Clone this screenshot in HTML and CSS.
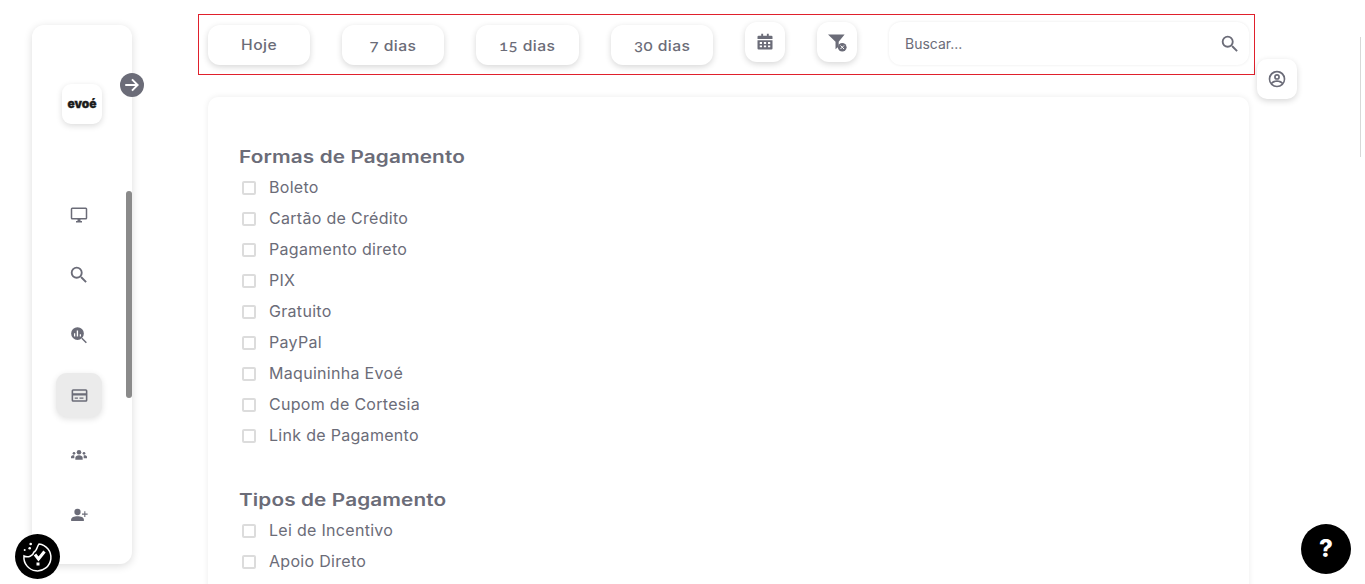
FILE: index.html
```html
<!DOCTYPE html>
<html lang="pt-BR">
<head>
<meta charset="utf-8">
<title>Evoé - Formas de Pagamento</title>
<link rel="stylesheet" href="styles.css">
</head>
<body>
<div class="page">
  <aside class="sidebar">
    <div class="logo">evoé</div>
    <button class="toggle" aria-label="Expandir">
      <svg viewBox="0 0 24 24" width="18" height="18"><path d="M3 12h16M12 4.500l7.500 7.500-7.500 7.500" fill="none" stroke="#fff" stroke-width="2.600"/></svg>
    </button>
    <nav class="nav">
      <a class="nav-item"><svg viewBox="0 0 24 24" width="18" height="18"><path d="M21 2H3a2 2 0 0 0-2 2v12a2 2 0 0 0 2 2h7v2H8v2h8v-2h-2v-2h7a2 2 0 0 0 2-2V4a2 2 0 0 0-2-2zm0 14H3V4h18z"/></svg></a>
      <a class="nav-item"><svg viewBox="0 0 24 24" width="22" height="22"><path d="M15.500 14h-.79l-.28-.27A6.470 6.470 0 0 0 16 9.500 6.500 6.500 0 1 0 9.500 16c1.610 0 3.090-.59 4.230-1.570l.27.28v.79l5 4.990L20.490 19zm-6 0C7 14 5 12 5 9.500S7 5 9.500 5 14 7 14 9.500 12 14 9.500 14z"/></svg></a>
      <a class="nav-item"><svg viewBox="0 0 24 24" width="18" height="18"><path d="M10 1.500a8.500 8.500 0 1 0 0 17 8.500 8.500 0 0 0 0-17zM7 14H5.300V9.500H7zm3.800 0H9V6h1.800zm3.900 0H13v-3h1.700z"/><path d="M16.500 15.500l6 6-1.400 1.400-6-6z"/></svg></a>
      <a class="nav-item active"><svg viewBox="0 0 24 24" width="19" height="19"><path d="M20 4H4a2 2 0 0 0-2 2v12a2 2 0 0 0 2 2h16a2 2 0 0 0 2-2V6a2 2 0 0 0-2-2zm0 14H4v-6h16zm0-9H4V6h16zM6 14.500h4V16H6zm6 0h5V16h-5z"/></svg></a>
      <a class="nav-item"><svg viewBox="0 0 24 24" width="16" height="16"><circle cx="12" cy="8" r="3.400"/><path d="M6.500 19v-3c0-2 2.500-3.500 5.500-3.500s5.500 1.500 5.500 3.500v3z"/><circle cx="4.500" cy="9.500" r="2"/><circle cx="19.500" cy="9.500" r="2"/><path d="M0 17v-2c0-1.500 1.500-2.500 4.500-2.500l.5.100V17zM24 17v-2c0-1.500-1.500-2.500-4.500-2.500l-.5.100V17z"/></svg></a>
      <a class="nav-item"><svg viewBox="0 0 24 24" width="18" height="18"><circle cx="10" cy="8" r="4.200"/><path d="M1.500 20v-2c0-3 4-4.500 8.500-4.500s8.500 1.500 8.500 4.500v2z"/><path d="M19 7h1.500v3H23.500v1.500h-3v3H19v-3h-3V10h3z"/></svg></a>
    </nav>
    <span class="thumb"></span>
  </aside>

  <main class="main">
    <div class="toolbar">
      <button class="range"><span class="range-label">Hoje</span></button>
      <button class="range"><span class="range-label"><span class="num">7</span> dias</span></button>
      <button class="range wide"><span class="range-label"><span class="num">15</span> dias</span></button>
      <button class="range"><span class="range-label"><span class="num">30</span> dias</span></button>
      <button class="square"><svg viewBox="0 0 24 24" width="18" height="18"><path d="M7 1h2.500v2.500h5V1H17v2.500h3.500A1.500 1.500 0 0 1 22 5v3H2V5a1.500 1.500 0 0 1 1.500-1.500H7zM2 9.500h20v11a1.500 1.500 0 0 1-1.500 1.500h-17A1.500 1.500 0 0 1 2 20.500zM5 12v2.500h3V12zm5.500 0v2.500h3V12zm5.500 0v2.500h3V12zM5 16.500V19h3v-2.500zm5.500 0V19h3v-2.500zm5.500 0V19h3v-2.500z"/></svg></button>
      <button class="square"><svg viewBox="0 0 24 24" width="19" height="19"><path d="M0 2h21l-7.500 9v6l-4 3.500V11z"/><circle cx="18" cy="18" r="5.500"/><path d="M15.800 15.800l4.400 4.400M20.200 15.800l-4.400 4.400" stroke="#fff" stroke-width="1.200"/></svg></button>
      <label class="search">
        <input class="search-input" type="text" placeholder="Buscar...">
        <svg viewBox="0 0 24 24" width="22" height="22"><path d="M15.500 14h-.79l-.28-.27A6.470 6.470 0 0 0 16 9.500 6.500 6.500 0 1 0 9.500 16c1.610 0 3.090-.59 4.230-1.570l.27.28v.79l5 4.990L20.490 19zm-6 0C7 14 5 12 5 9.500S7 5 9.500 5 14 7 14 9.500 12 14 9.500 14z"/></svg>
      </label>
    </div>

    <section class="card">
      <h2 class="group-title">Formas de Pagamento</h2>
      <ul class="checks">
        <li class="check"><span class="box"></span>Boleto</li>
        <li class="check"><span class="box"></span>Cartão de Crédito</li>
        <li class="check"><span class="box"></span>Pagamento direto</li>
        <li class="check"><span class="box"></span>PIX</li>
        <li class="check"><span class="box"></span>Gratuito</li>
        <li class="check"><span class="box"></span>PayPal</li>
        <li class="check"><span class="box"></span>Maquininha Evoé</li>
        <li class="check"><span class="box"></span>Cupom de Cortesia</li>
        <li class="check"><span class="box"></span>Link de Pagamento</li>
      </ul>
      <h2 class="group-title second">Tipos de Pagamento</h2>
      <ul class="checks">
        <li class="check"><span class="box"></span>Lei de Incentivo</li>
        <li class="check"><span class="box"></span>Apoio Direto</li>
      </ul>
    </section>
  </main>
</div>

<button class="profile" aria-label="Perfil"><svg viewBox="0 0 24 24" width="20" height="20"><path d="M12 2a10 10 0 1 0 0 20 10 10 0 0 0 0-20zm0 18a8 8 0 0 1-5.600-2.300C7.800 16.200 9.800 15.500 12 15.500s4.200.7 5.600 2.200A8 8 0 0 1 12 20zm7-3.800C17.300 14.500 14.800 13.500 12 13.500s-5.300 1-7 2.700A8 8 0 1 1 19 16.200zM12 6a3.500 3.500 0 1 0 0 7 3.500 3.500 0 0 0 0-7zm0 5a1.500 1.500 0 1 1 0-3 1.500 1.500 0 0 1 0 3z"/></svg></button>
<span class="edge"></span>
<button class="cookie" aria-label="Cookies"><svg viewBox="0 0 45 45" width="45" height="45"><path d="M24 10A13.500 13.500 0 1 1 9 22C13 24 18 22 19 18C22 17 22 12 24 10z" fill="none" stroke="#fff" stroke-width="1.500"/><path d="M20 20.500l3.500 4.500 6-7.500" fill="none" stroke="#fff" stroke-width="3"/><rect x="21.500" y="28.500" width="3" height="3" fill="#fff"/><circle cx="15.700" cy="10" r="1.300" fill="#fff"/><circle cx="14.700" cy="14.300" r="1.300" fill="#fff"/><circle cx="9.700" cy="16" r="1" fill="#fff"/></svg></button>
<button class="help" aria-label="Ajuda">?</button>
</body>
</html>
```

FILE: styles.css
```css
* { box-sizing: border-box; }
html, body { margin: 0; height: 584px; overflow: hidden; background: #fff; }
body { font-family: "Inter", "Liberation Sans", sans-serif; color: #6b6c78; }
button { font: inherit; color: inherit; border: 0; background: #fff; padding: 0; }
svg { display: block; fill: #6b6c78; }

.page { display: flex; align-items: flex-start; height: 584px; }

.sidebar {
  position: relative;
  flex: none;
  width: 100px;
  height: 539px;
  margin: 25px 0 0 32px;
  padding-top: 59px;
  border-radius: 12px;
  background: #fff;
  box-shadow: 0 2px 8px rgba(0, 0, 0, .14);
}
.logo {
  width: 40px;
  height: 40px;
  margin-left: 30px;
  border-radius: 9px;
  background: #fff;
  box-shadow: 0 2px 6px rgba(0, 0, 0, .14);
  color: #1c1c1c;
  font: 900 12px/40px "Inter", sans-serif;
  text-align: center;
  -webkit-text-stroke: .3px #1c1c1c;
}
.toggle {
  position: absolute;
  top: 48px;
  left: 88px;
  display: flex;
  align-items: center;
  justify-content: center;
  width: 24px;
  height: 24px;
  border-radius: 50%;
  background: #6b6c78;
}
.nav { display: flex; flex-direction: column; align-items: center; gap: 16px; margin: 69px 0 0 -6px; }
.nav-item { display: flex; align-items: center; justify-content: center; width: 46px; height: 44px; border-radius: 11px; }
.nav-item.active { background: #ebebeb; box-shadow: 0 2px 6px rgba(0, 0, 0, .12); }
.thumb { position: absolute; top: 166px; right: 0; width: 6px; height: 207px; border-radius: 3px; background: #8a8a8a; }

.main { flex: none; width: 1057px; margin-left: 66px; }
.toolbar {
  display: flex;
  align-items: flex-start;
  height: 61px;
  margin-top: 14px;
  padding: 7px 0 0 9px;
  border: 1px solid #e0202c;
}
.range {
  flex: none;
  width: 102px;
  height: 40px;
  margin: 3px 32px 0 0;
  border-radius: 12px;
  box-shadow: 0 2px 6px rgba(0, 0, 0, .16);
  font-size: 14px;
  font-weight: 500;
  letter-spacing: .4px;
  line-height: 38px;
}
.range.wide { width: 103px; }
.range-label { display: inline-block; transform: scaleX(1.12); }
.num { font-family: "Lato", "Inter", sans-serif; font-variant-numeric: oldstyle-nums; font-size: 15px; }
.square {
  display: flex;
  flex: none;
  align-items: center;
  justify-content: center;
  width: 40px;
  height: 40px;
  margin-right: 32px;
  border-radius: 12px;
  box-shadow: 0 2px 6px rgba(0, 0, 0, .16);
}
.search {
  display: flex;
  flex: none;
  align-items: center;
  width: 360px;
  height: 43px;
  padding: 0 8px 0 14px;
  border-radius: 12px;
  box-shadow: 0 0 3px rgba(0, 0, 0, .09);
}
.search-input { flex: 1; min-width: 0; border: 0; outline: 0; background: none; font: 14px "Inter", sans-serif; color: #6b6c78; }
.search-input::placeholder { color: #6b6c78; opacity: 1; }

.card {
  width: 1041px;
  height: 520px;
  margin: 22px 0 0 10px;
  padding: 48px 31px 0;
  border-radius: 10px;
  background: #fff;
  box-shadow: 0 0 6px rgba(0, 0, 0, .08);
}
.group-title {
  width: max-content;
  margin: 0 0 2px;
  font-size: 17px;
  line-height: 24px;
  font-weight: 600;
  letter-spacing: .1px;
  color: #6b6c78;
  transform: scaleX(1.22);
  transform-origin: left center;
}
.group-title.second { margin-top: 38px; }
.checks { margin: 0; padding: 0; list-style: none; }
.check { display: flex; align-items: center; height: 31px; font-size: 16px; letter-spacing: .3px; }
.box { flex: none; width: 14px; height: 14px; margin: 2px 13px 0 3px; border: 2px solid #dcdcdc; border-radius: 2px; }

.profile {
  position: fixed;
  top: 59px;
  left: 1257px;
  display: flex;
  align-items: center;
  justify-content: center;
  width: 40px;
  height: 40px;
  border-radius: 10px;
  box-shadow: 0 2px 6px rgba(0, 0, 0, .16);
}
.edge { position: fixed; top: 37px; right: 4px; width: 1px; height: 120px; background: #d8d8d8; }
.cookie {
  position: fixed;
  left: 15px;
  top: 534px;
  width: 45px;
  height: 45px;
  border-radius: 50%;
  background: #000;
}
.help {
  position: fixed;
  left: 1301px;
  top: 524px;
  width: 50px;
  height: 50px;
  border-radius: 50%;
  background: #000;
  color: #fff;
  font: 800 24px/50px "Inter", sans-serif;
  text-align: center;
}
```
